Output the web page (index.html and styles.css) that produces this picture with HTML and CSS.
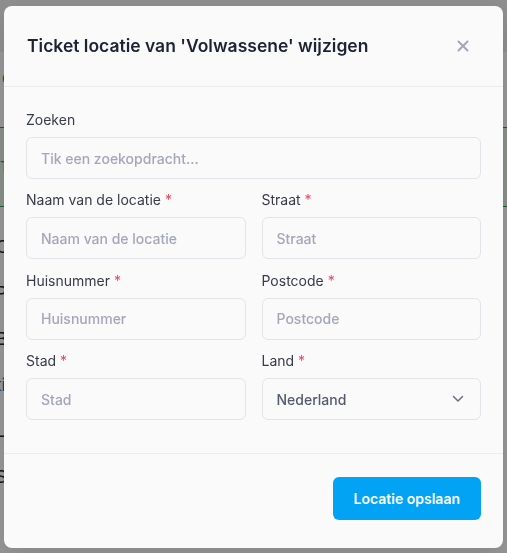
FILE: index.html
```html
<!DOCTYPE html>
<html lang="nl">
<head>
<meta charset="utf-8">
<title>Ticket locatie wijzigen</title>
<link rel="stylesheet" href="styles.css">
</head>
<body>
<div class="page">
  <div class="page-top"></div>
  <div class="page-row">Overzicht</div>
  <div class="page-green">Tickets</div>
  <div class="page-list">
    <p>Categorie</p>
    <p>Prijs</p>
    <p>Beschrijving</p>
    <p class="link">tickets</p>
    <p>Lijst</p>
    <p>Salsa</p>
  </div>
</div>
<div class="backdrop"></div>
<div class="modal" role="dialog">
  <div class="modal-header">
    <h2 class="modal-title">Ticket locatie van 'Volwassene' wijzigen</h2>
    <button class="close" type="button" aria-label="Sluiten">
      <svg width="12" height="12" viewBox="0 0 12 12"><path d="M1.5 1.5 L10.5 10.5 M10.5 1.5 L1.5 10.5" stroke="currentColor" stroke-width="2" stroke-linecap="round" fill="none"/></svg>
    </button>
  </div>
  <div class="modal-body">
    <div class="field full">
      <label class="label">Zoeken</label>
      <input class="input" type="text" placeholder="Tik een zoekopdracht...">
    </div>
    <div class="field">
      <label class="label">Naam van de locatie <span class="req">*</span></label>
      <input class="input" type="text" placeholder="Naam van de locatie">
    </div>
    <div class="field">
      <label class="label">Straat <span class="req">*</span></label>
      <input class="input" type="text" placeholder="Straat">
    </div>
    <div class="field">
      <label class="label">Huisnummer <span class="req">*</span></label>
      <input class="input" type="text" placeholder="Huisnummer">
    </div>
    <div class="field">
      <label class="label">Postcode <span class="req">*</span></label>
      <input class="input" type="text" placeholder="Postcode">
    </div>
    <div class="field">
      <label class="label">Stad <span class="req">*</span></label>
      <input class="input" type="text" placeholder="Stad">
    </div>
    <div class="field">
      <label class="label">Land <span class="req">*</span></label>
      <div class="select">
        <span>Nederland</span>
        <svg width="12" height="8" viewBox="0 0 12 8"><path d="M1.5 1.5 L6 6 L10.5 1.5" stroke="currentColor" stroke-width="1.5" stroke-linecap="round" stroke-linejoin="round" fill="none"/></svg>
      </div>
    </div>
  </div>
  <div class="modal-footer">
    <button class="btn-primary" type="button">Locatie opslaan</button>
  </div>
</div>
</body>
</html>
```
FILE: styles.css
```css
* { box-sizing: border-box; }

html, body {
  margin: 0;
  padding: 0;
  height: 100%;
}

body {
  font-family: Inter, "Noto Sans", "Liberation Sans", sans-serif;
  background: #ffffff;
  overflow: hidden;
}

/* background page (behind the backdrop) */
.page {
  font-size: 14px;
  color: #1f2937;
}
.page-top {
  height: 52px;
  background: #f1f1f1;
}
.page-row {
  height: 75px;
  padding: 18px 2px;
  color: #666;
}
.page-green {
  height: 80px;
  background: #e6f3e6;
  border-top: 1px solid #22a34a;
  border-bottom: 1px solid #22a34a;
  padding: 30px 0;
  color: #22a34a;
}
.page-list {
  padding: 30px 0 0 0;
}
.page-list p {
  margin: 0 0 26px;
  font-size: 17px;
  margin-left: -4px;
}
.page-list p.link {
  color: #0b6fc7;
}

.backdrop {
  position: fixed;
  inset: 0;
  background: rgba(0, 0, 0, 0.41);
}

/* modal */
.modal {
  position: fixed;
  top: 6px;
  left: 4px;
  width: 499px;
  background: #fafafa;
  border-radius: 8px;
  display: flex;
  flex-direction: column;
  box-shadow: 0 10px 25px rgba(0, 0, 0, 0.1);
}

.modal-header {
  height: 81px;
  display: flex;
  align-items: center;
  justify-content: space-between;
  padding: 0 34px 0 23px;
  border-bottom: 1px solid #ececef;
}

.modal-title {
  margin: 0;
  font-size: 17.5px;
  line-height: 28px;
  font-weight: 600;
  color: #1c2333;
}

.close {
  border: 0;
  background: none;
  padding: 0;
  width: 12px;
  height: 12px;
  color: #a3a7b7;
  display: flex;
  cursor: pointer;
}

.modal-body {
  padding: 22px 22px 33px 22px;
  display: grid;
  grid-template-columns: 1fr 1fr;
  column-gap: 16px;
  row-gap: 10.4px;
}

.field {
  display: flex;
  flex-direction: column;
  gap: 8px;
  min-width: 0;
}
.field.full {
  grid-column: 1 / -1;
}

.label {
  font-size: 14px;
  line-height: 20px;
  color: #363b48;
  padding-top: 1px;
  margin-bottom: -1px;
}
.req {
  color: #f43f5e;
}

.input,
.select {
  height: 42px;
  width: 100%;
  border: 1px solid #e3e4ea;
  border-radius: 6px;
  background: #fafafa;
  padding: 0 14px;
  font-family: inherit;
  font-size: 14px;
  color: #374151;
  outline: none;
}
.input::placeholder {
  color: #a3a7b8;
  font-weight: 500;
  opacity: 1;
}

.select {
  display: flex;
  align-items: center;
  justify-content: space-between;
  color: #555b6e;
  font-weight: 500;
  padding-right: 16px;
}
.select svg {
  color: #6b7080;
}

.modal-footer {
  border-top: 1px solid #ececef;
  padding: 23px 22px 28px;
  display: flex;
  justify-content: flex-end;
}

.btn-primary {
  height: 43px;
  padding: 0 21px;
  border: 0;
  border-radius: 6px;
  background: #02a2f5;
  color: #ffffff;
  font-family: inherit;
  font-size: 14px;
  font-weight: 600;
  cursor: pointer;
}
```
